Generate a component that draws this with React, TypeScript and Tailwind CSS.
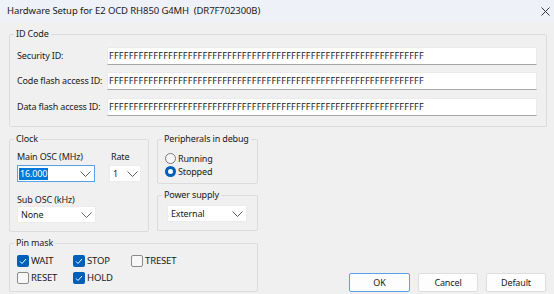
import React from "react";

const FONT = { fontFamily: '"Noto Sans", "Open Sans", sans-serif' };

function Chevron() {
  return (
    <svg width="11" height="6" viewBox="0 0 11 6" className="shrink-0">
      <polyline points="0.5,0.5 5.5,5.5 10.5,0.5" fill="none" stroke="#5f5f5f" strokeWidth="1" />
    </svg>
  );
}

function Group({ title, className = "", children }: { title: string; className?: string; children: React.ReactNode }) {
  return (
    <fieldset className={`border border-[#dcdcdc] rounded-[2px] min-w-0 ${className}`}>
      <legend className="ml-[4px] px-[2px] leading-[12px] text-[#1a1a1a]">{title}</legend>
      {children}
    </fieldset>
  );
}

function Combo({ value, w, focused = false, chevronPad = "pr-[3px]" }: { value: string; w: string; focused?: boolean; chevronPad?: string }) {
  return (
    <div
      className={`${w} h-[17px] flex items-center justify-between bg-white ${chevronPad} ${
        focused ? "border border-[#5aa0e6]" : "border border-[#ececec]"
      }`}
    >
      {focused ? (
        <span className="ml-[1px] bg-[#0078d7] text-white leading-[12px] px-[1px]">{value}</span>
      ) : (
        <span className="ml-[3px] text-[#1a1a1a] leading-[12px]">{value}</span>
      )}
      <Chevron />
    </div>
  );
}

function Checkbox({ checked, label, w }: { checked: boolean; label: string; w: string }) {
  return (
    <div className={`${w} flex items-center h-[12px]`}>
      {checked ? (
        <div className="w-[12px] h-[12px] rounded-[2px] bg-[#005fb8] flex items-center justify-center">
          <svg width="8" height="7" viewBox="0 0 8 7">
            <polyline points="1,3.5 3,5.5 7,1" fill="none" stroke="#ffffff" strokeWidth="1" />
          </svg>
        </div>
      ) : (
        <div className="w-[12px] h-[12px] rounded-[2px] border border-[#8a8a8a] bg-[#f7f7f7]" />
      )}
      <span className="ml-[2px] leading-[12px] text-[#1a1a1a] text-[9.5px]">{label}</span>
    </div>
  );
}

function Radio({ checked, label }: { checked: boolean; label: string }) {
  return (
    <div className="flex items-center h-[13px]">
      {checked ? (
        <div className="w-[11px] h-[11px] rounded-full bg-[#005fb8] flex items-center justify-center">
          <div className="w-[5px] h-[5px] rounded-full bg-white" />
        </div>
      ) : (
        <div className="w-[11px] h-[11px] rounded-full border border-[#7a7a7a] bg-[#f7f7f7]" />
      )}
      <span className="ml-[2px] leading-[12px] text-[#1a1a1a]">{label}</span>
    </div>
  );
}

function IdRow({ label, className = "" }: { label: string; className?: string }) {
  return (
    <div className={`flex items-center ${className}`}>
      <div className="w-[90px] leading-[12px] text-[#1a1a1a]">{label}</div>
      <div className="flex-1 h-[18px] bg-white border border-[#ebebeb] border-b-[#a6a6a6] flex items-center pl-[1px]">
        <span className="leading-[12px] text-[#1a1a1a] tracking-[0.25px]">{"F".repeat(64)}</span>
      </div>
    </div>
  );
}

function Button({ label, w, primary = false }: { label: string; w: string; primary?: boolean }) {
  return (
    <div
      className={`${w} h-[19px] flex items-center justify-center rounded-[2px] bg-[#fdfdfd] text-[#1a1a1a] ${
        primary ? "border border-[#5aa0e6]" : "border border-[#dedede]"
      }`}
    >
      {label}
    </div>
  );
}

export default function App() {
  return (
    <div className="w-[554px] h-[294px] bg-[#f0f0f0] text-[9px] tracking-[-0.15px] overflow-hidden" style={FONT}>
      {/* Title bar */}
      <div className="h-[22px] bg-[#eef2f8] flex items-center justify-between pl-[7px] pr-[4px]">
        <span className="text-[9.5px] tracking-[-0.1px] text-[#1a1a1a] whitespace-pre">
          Hardware Setup for E2 OCD RH850 G4MH  (DR7F702300B)
        </span>
        <svg width="9" height="9" viewBox="0 0 9 9">
          <path d="M0.5 0.5 L8.5 8.5 M8.5 0.5 L0.5 8.5" stroke="#333" strokeWidth="1" />
        </svg>
      </div>

      <div className="pl-[9px] pr-[7px] pt-[6px]">
        <Group title="ID Code">
          <div className="pl-[7px] pr-[9px] pt-[7px] pb-[10px]">
            <IdRow label="Security ID:" />
            <IdRow label="Code flash access ID:" className="mt-[7px]" />
            <IdRow label="Data flash access ID:" className="mt-[8px]" />
          </div>
        </Group>

        <div className="flex mt-[6px]">
          <div className="w-[249px] flex flex-col">
            <div className="flex">
              <Group title="Clock" className="w-[140px]">
                <div className="pl-[7px] pt-[6px] pb-[8px] flex">
                  <div className="flex flex-col">
                    <div className="leading-[12px] text-[#1a1a1a]">Main OSC (MHz)</div>
                    <div className="mt-[2px]">
                      <Combo value="16.000" w="w-[78px]" focused />
                    </div>
                    <div className="mt-[12px] leading-[12px] text-[#1a1a1a]">Sub OSC (kHz)</div>
                    <div className="mt-[0px]">
                      <Combo value="None" w="w-[79px]" />
                    </div>
                  </div>
                  <div className="ml-[13px] flex flex-col">
                    <div className="pl-[2px] leading-[12px] text-[#1a1a1a]">Rate</div>
                    <div className="mt-[2px]">
                      <Combo value="1" w="w-[32px]" chevronPad="pr-[2px]" />
                    </div>
                  </div>
                </div>
              </Group>

              <div className="ml-[8px] flex-1 flex flex-col">
                <Group title="Peripherals in debug">
                  <div className="pl-[7px] pt-[7px] pb-[5px]">
                    <Radio checked={false} label="Running" />
                    <Radio checked label="Stopped" />
                  </div>
                </Group>
                <Group title="Power supply" className="mt-[5px]">
                  <div className="pl-[9px] pt-[4px] pb-[8px]">
                    <Combo value="External" w="w-[80px]" />
                  </div>
                </Group>
              </div>
            </div>

            <Group title="Pin mask" className="mt-[5px]">
              <div className="pl-[7px] pt-[6px] pb-[7px] flex flex-col gap-[5px]">
                <div className="flex">
                  <Checkbox checked label="WAIT" w="w-[56px]" />
                  <Checkbox checked label="STOP" w="w-[58px]" />
                  <Checkbox checked={false} label="TRESET" w="w-[60px]" />
                </div>
                <div className="flex">
                  <Checkbox checked={false} label="RESET" w="w-[56px]" />
                  <Checkbox checked label="HOLD" w="w-[58px]" />
                </div>
              </div>
            </Group>
          </div>

          <div className="flex-1 flex items-end justify-end gap-[8px] mr-[1px]">
            <Button label="OK" w="w-[61px]" primary />
            <Button label="Cancel" w="w-[60px]" />
            <Button label="Default" w="w-[60px]" />
          </div>
        </div>
      </div>
    </div>
  );
}
